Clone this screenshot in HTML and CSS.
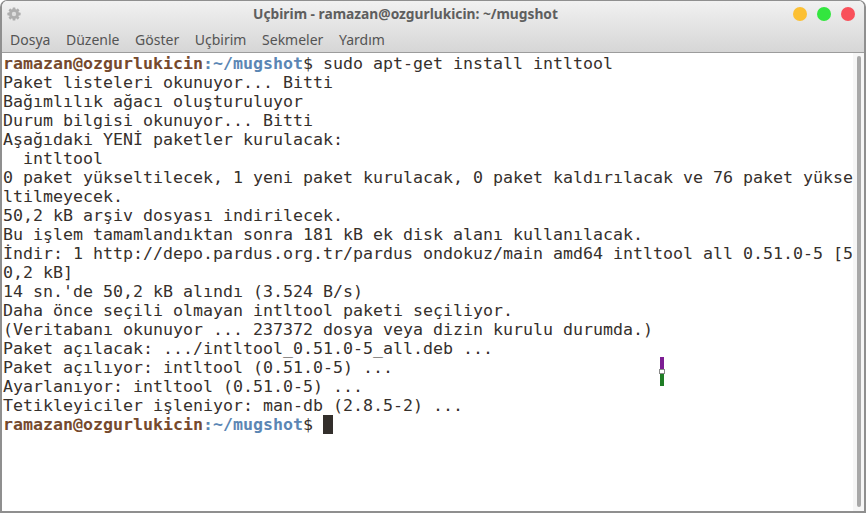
FILE: index.html
```html
<!DOCTYPE html>
<html lang="tr">
<head>
<meta charset="utf-8">
<title>Uçbirim</title>
<link rel="stylesheet" href="styles.css">
</head>
<body>
<div class="window">
  <header class="chrome">
    <div class="titlebar">
      <svg class="gear" width="14" height="14" viewBox="0 0 14 14"><g fill="#aeaeae"><circle cx="7" cy="7" r="5"/><rect x="5.6" y="0.4" width="2.8" height="13.2" rx=".6"/><rect x="0.4" y="5.6" width="13.2" height="2.8" ry=".6"/><rect x="5.6" y="0.4" width="2.8" height="13.2" rx=".6" transform="rotate(45 7 7)"/><rect x="5.6" y="0.4" width="2.8" height="13.2" rx=".6" transform="rotate(-45 7 7)"/></g><circle cx="7" cy="7" r="2.2" fill="#dedede"/></svg>
      <div class="title">Uçbirim - ramazan@ozgurlukicin: ~/mugshot</div>
      <div class="lights">
        <span class="light amber"></span>
        <span class="light green"></span>
        <span class="light red"></span>
      </div>
    </div>
    <nav class="menubar">
      <span>Dosya</span><span>Düzenle</span><span>Göster</span><span>Uçbirim</span><span>Sekmeler</span><span>Yardım</span>
    </nav>
  </header>
  <main class="body">
<pre class="term"><b class="user">ramazan@ozgurlukicin</b><span class="colon">:</span><b class="path">~/mugshot</b>$ sudo apt-get install intltool
Paket listeleri okunuyor... Bitti
Bağımlılık ağacı oluşturuluyor
Durum bilgisi okunuyor... Bitti
Aşağıdaki YENİ paketler kurulacak:
  intltool
0 paket yükseltilecek, 1 yeni paket kurulacak, 0 paket kaldırılacak ve 76 paket yükse
ltilmeyecek.
50,2 kB arşiv dosyası indirilecek.
Bu işlem tamamlandıktan sonra 181 kB ek disk alanı kullanılacak.
İndir: 1 http://depo.pardus.org.tr/pardus ondokuz/main amd64 intltool all 0.51.0-5 [5
0,2 kB]
14 sn.'de 50,2 kB alındı (3.524 B/s)
Daha önce seçili olmayan intltool paketi seçiliyor.
(Veritabanı okunuyor ... 237372 dosya veya dizin kurulu durumda.)
Paket açılacak: .../intltool_0.51.0-5_all.deb ...
Paket açılıyor: intltool (0.51.0-5) ...
Ayarlanıyor: intltool (0.51.0-5) ...
Tetikleyiciler işleniyor: man-db (2.8.5-2) ...
<b class="user">ramazan@ozgurlukicin</b><span class="colon">:</span><b class="path">~/mugshot</b>$ <span class="cursor"> </span></pre>
    <div class="scrollbar"><div class="thumb"></div></div>
    <div class="cursor-ibeam"><i class="ib-top"></i><i class="ib-mid"></i><i class="ib-bot"></i></div>
  </main>
</div>
</body>
</html>
```
FILE: styles.css
```css
html, body { margin: 0; padding: 0; background: #ffffff; }
body { width: 866px; height: 513px; overflow: hidden; }
.window {
  box-sizing: border-box;
  width: 866px;
  height: 513px;
  display: flex;
  flex-direction: column;
  border: 1px solid #8f8f8f;
  border-width: 1px 2px 2px 2px;
  border-radius: 7px 7px 0 0;
  overflow: hidden;
  background: #fff;
}
.chrome {
  flex: none;
  height: 52px;
  box-sizing: border-box;
  background: linear-gradient(#f1f1f1, #d6d6d6);
  border-bottom: 1px solid #9c9c9c;
  display: flex;
  flex-direction: column;
}
.titlebar {
  height: 26px;
  display: flex;
  align-items: center;
  padding: 0 0 0 5px;
  position: relative;
}
.gear { flex: none; }
.title {
  flex: 1;
  text-align: center;
  font: bold 13.75px/1 "Noto Sans", sans-serif;
  color: #5e5e5e;
  padding-right: 3px;
}
.lights { display: flex; gap: 10px; padding-right: 9px; }
.light { width: 14px; height: 14px; border-radius: 50%; display: block; }
.amber { background: #fcc033; }
.green { background: #33e63f; }
.red { background: #f9505a; }
.menubar {
  display: flex;
  gap: 15.6px;
  padding: 3px 0 0 8px;
  font: 14px/20px "Noto Sans", sans-serif;
  color: #545454;
}
.body { flex: 1; position: relative; display: flex; min-height: 0; }
.term {
  flex: 1;
  margin: 0;
  padding: 1px 0 0 1px;
  font: 16.61px/19px "DejaVu Sans Mono", monospace;
  color: #36302c;
  white-space: pre;
  overflow: hidden;
}
.user { color: #75492d; font-weight: bold; }
.path { color: #5b86b4; font-weight: bold; }
.colon { color: #5b86b4; font-weight: bold; }
.cursor { background: #332f2c; display: inline-block; width: 10px; height: 19px; vertical-align: top; }
.scrollbar {
  flex: none;
  width: 11px;
  box-sizing: border-box;
  background: #f6f6f6;
  padding: 3px 0 4px 4px;
}
.thumb { width: 4px; height: 100%; background: #a8a8a8; border-radius: 2px; }
.cursor-ibeam {
  position: absolute;
  left: 657px;
  top: 304px;
  width: 6px;
  height: 29px;
  display: flex;
  flex-direction: column;
  align-items: center;
}
.cursor-ibeam i { display: block; }
.ib-top { width: 4px; height: 12px; background: #7d1d93; }
.ib-mid { width: 6px; height: 5px; flex: none; background: #fff; border: 1px solid #8a8a8a; box-sizing: border-box; }
.ib-bot { width: 4px; height: 12px; background: #1f7d25; }
```
